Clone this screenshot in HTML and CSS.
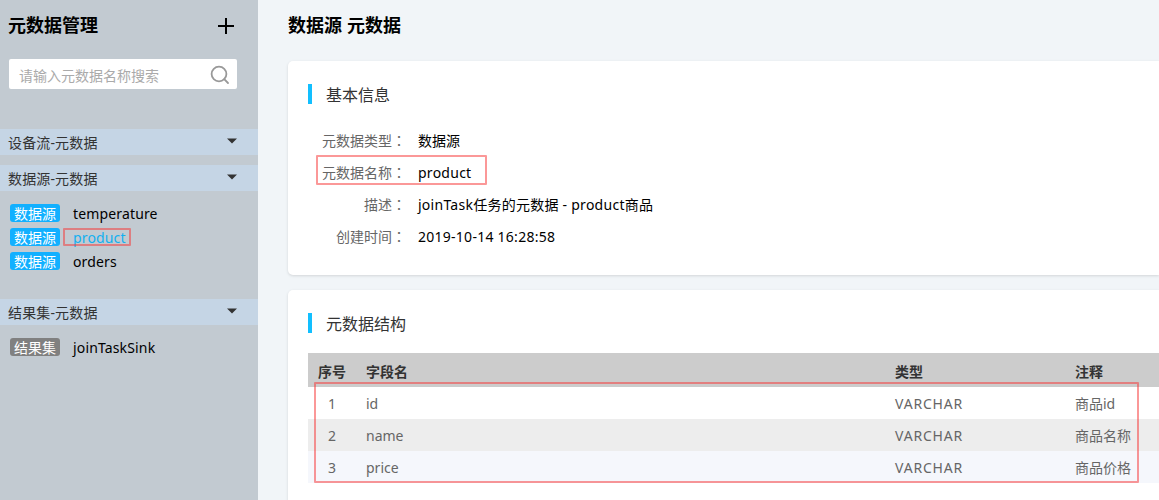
FILE: index.html
```html
<!DOCTYPE html>
<html lang="zh-CN">
<head>
<meta charset="utf-8">
<title>元数据管理</title>
<link rel="stylesheet" href="styles.css">
</head>
<body>
<div class="app">
  <aside class="sidebar">
    <header class="side-head">
      <h1 class="title">元数据管理</h1>
      <svg class="add" width="16" height="16" viewBox="0 0 16 16"><path d="M8 0V16M0 8H16" stroke="#000" stroke-width="2"/></svg>
    </header>
    <div class="search">
      <span class="placeholder">请输入元数据名称搜索</span>
      <svg width="20" height="20" viewBox="0 0 20 20" fill="none" stroke="#999" stroke-width="1.8"><circle cx="9" cy="9" r="7.4"/><path d="M14.2 14.2L18 18" stroke-linecap="round"/></svg>
    </div>
    <section class="group">
      <div class="group-head"><span>设备流-元数据</span><svg class="caret" width="10" height="6" viewBox="0 0 10 6"><path d="M0 .5H10L5 5.5Z" fill="#333"/></svg></div>
    </section>
    <section class="group">
      <div class="group-head"><span>数据源-元数据</span><svg class="caret" width="10" height="6" viewBox="0 0 10 6"><path d="M0 .5H10L5 5.5Z" fill="#333"/></svg></div>
      <ul class="items">
        <li class="item"><span class="badge">数据源</span><span class="name">temperature</span></li>
        <li class="item active"><span class="badge">数据源</span><span class="name">product</span></li>
        <li class="item"><span class="badge">数据源</span><span class="name">orders</span></li>
      </ul>
    </section>
    <section class="group">
      <div class="group-head"><span>结果集-元数据</span><svg class="caret" width="10" height="6" viewBox="0 0 10 6"><path d="M0 .5H10L5 5.5Z" fill="#333"/></svg></div>
      <ul class="items">
        <li class="item"><span class="badge result">结果集</span><span class="name">joinTaskSink</span></li>
      </ul>
    </section>
  </aside>
  <main class="main">
    <h1 class="title">数据源 元数据</h1>
    <section class="card info-card">
      <h2 class="card-title">基本信息</h2>
      <dl class="info">
        <dt>元数据类型<span class="colon" lang="zh-TW">：</span></dt><dd class="plain">数据源</dd>
        <dt>元数据名称<span class="colon" lang="zh-TW">：</span></dt><dd>product</dd>
        <dt>描述<span class="colon" lang="zh-TW">：</span></dt><dd>joinTask任务的元数据 - product商品</dd>
        <dt>创建时间<span class="colon" lang="zh-TW">：</span></dt><dd>2019-10-14 16:28:58</dd>
      </dl>
    </section>
    <section class="card table-card">
      <h2 class="card-title">元数据结构</h2>
      <div class="table">
        <div class="row head"><span class="num">序号</span><span>字段名</span><span>类型</span><span>注释</span></div>
        <div class="row"><span class="num">1</span><span>id</span><span class="type">VARCHAR</span><span>商品id</span></div>
        <div class="row even"><span class="num">2</span><span>name</span><span class="type">VARCHAR</span><span>商品名称</span></div>
        <div class="row third"><span class="num">3</span><span>price</span><span class="type">VARCHAR</span><span>商品价格</span></div>
      </div>
    </section>
  </main>
  <div class="mark mark-item"></div>
  <div class="mark mark-name"></div>
  <div class="mark mark-table"></div>
</div>
</body>
</html>
```
FILE: styles.css
```css
* { box-sizing: border-box; margin: 0; padding: 0; }
body {
  font: 14px/24px "Noto Sans", "Noto Sans CJK SC", sans-serif;
  color: #000;
  background: #f1f5f8;
  overflow: hidden;
}
.app { display: flex; position: relative; height: 500px; overflow: hidden; }
.title { font-size: 18px; line-height: 26px; font-weight: 700; font-family: "Liberation Sans", "Noto Sans CJK SC", sans-serif; white-space: nowrap; }

.sidebar { width: 258px; flex: none; background: #c2cad1; }
.side-head { display: flex; justify-content: space-between; align-items: center; height: 52px; padding: 0 24px 0 8px; }
.search {
  display: flex; justify-content: space-between; align-items: center;
  width: 228px; height: 30px; margin: 7px 0 40px 9px; padding: 2px 7px 0 10px;
  background: #fff; border-radius: 2px;
}
.placeholder { color: #aaa; padding-top: 1px; }
.group { margin-bottom: 10px; }
.group-head {
  display: flex; justify-content: space-between; align-items: center;
  height: 26px; padding: 1px 21px 0 8px; background: #c5d5e5; color: #333; letter-spacing: .15px;
}
.caret { margin-top: -3px; }
.items { list-style: none; padding: 10px 0 16px 10px; }
.item { display: flex; align-items: center; height: 24px; gap: 13px; }
.name { padding-top: 2px; letter-spacing: .15px; }
.badge {
  width: 50px; height: 18px; line-height: 19px; border-radius: 3px;
  background: #12b0ff; color: #fff; text-align: center;
}
.result { background: #808080; }
.active { color: #12b0f0; }

.main { flex: none; width: 901px; padding: 13px 0 0 30px; }
.card { background: #fff; border-radius: 5px 0 0 5px; box-shadow: 0 1px 3px rgba(0, 0, 0, .13); padding: 23px 0 0 20px; }
.info-card { height: 214px; margin-top: 22px; }
.table-card { height: 240px; margin-top: 15px; }
.card-title {
  font-size: 16px; font-weight: 400; line-height: 22px; height: 20px;
  color: #333; padding-left: 14px; border-left: 4px solid #12bfff;
}
.info { display: grid; grid-template-columns: 98px auto; column-gap: 12px; padding-top: 21px; line-height: 32px; }
.info dt { text-align: right; color: #666; height: 32px; }
.info dd { white-space: nowrap; letter-spacing: .26px; }
.info .plain { letter-spacing: 0; }
.colon { font-family: "Noto Sans CJK TC", sans-serif; line-height: 1; }

.table { margin-top: 20px; color: #666; }
.row { display: grid; grid-template-columns: 48px 539px 180px 1fr; height: 32px; line-height: 34px; }
.row > span + span { padding-left: 10px; }
.row > span:nth-child(n+3) { padding-left: 0; }
.num { text-align: center; }
.type { letter-spacing: .8px; }
.head { height: 34px; line-height: 38px; background: #ccc; color: #333; font-weight: 700; }
.even { background: #ededed; }
.third { background: #f5f7fc; }

/* Red annotation frames over the content */
.mark { position: absolute; border: 2px solid rgba(248, 50, 50, .5); border-radius: 1px; }
.mark-item { left: 63px; top: 228px; width: 68px; height: 18px; }
.mark-name { left: 316px; top: 155px; width: 171px; height: 30px; }
.mark-table { left: 314px; top: 382px; width: 825px; height: 101px; }
```
